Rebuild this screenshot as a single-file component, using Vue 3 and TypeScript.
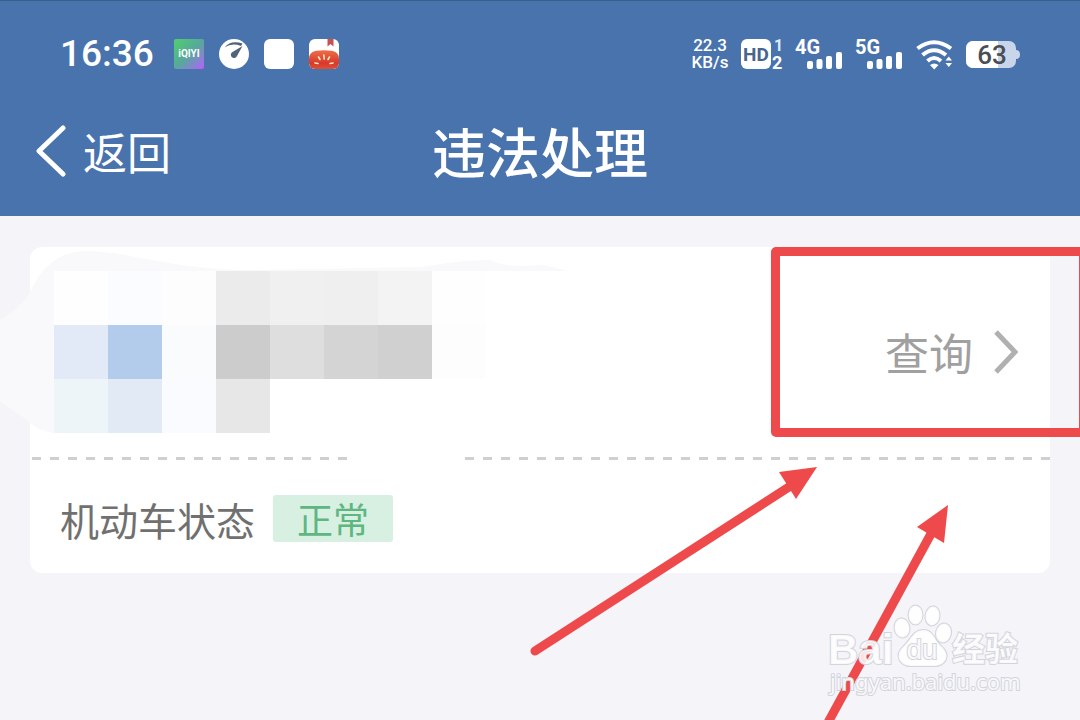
<script setup lang="ts">
interface Signal {
  label: string
}

const signals: Signal[] = [{ label: '4G' }, { label: '5G' }]

const mosaic: string[] = [
  '#fefefe', '#fafcff', '#fdfdfe', '#ebebeb', '#f0f0f0', '#efefef', '#f3f3f3', '#fefefe',
  '#e2eaf7', '#b3cceb', '#f9fbfd', '#cccccc', '#dedede', '#d4d4d4', '#d0d0d0', '#fdfdfd',
  '#eef5f8', '#e2eaf6', '#f9fbfe', '#e8e7e7', '#ffffff', '#ffffff', '#ffffff', '#ffffff',
]
</script>

<template>
  <div class="page">
    <header class="top">
      <div class="status">
        <div class="status-left">
          <span class="time">16:36</span>
          <svg class="app-icon" viewBox="0 0 30 30" aria-hidden="true">
            <defs>
              <linearGradient id="video" x1="0" y1="0" x2="1" y2="1">
                <stop offset="0" stop-color="#4fd06c" />
                <stop offset="0.5" stop-color="#56a99a" />
                <stop offset="0.8" stop-color="#8c80d8" />
                <stop offset="1" stop-color="#c05cfa" />
              </linearGradient>
            </defs>
            <rect width="30" height="30" rx="2" fill="url(#video)" />
            <text x="15" y="18" text-anchor="middle" class="video-text">iQIYI</text>
          </svg>
          <svg class="app-icon" viewBox="0 0 30 30" aria-hidden="true">
            <circle cx="15" cy="15" r="15" fill="#fff" />
            <path d="M5.500 8.500 Q12 0.500 23.500 4.500 L22 7 Q13 3.500 5.500 8.500 Z" fill="#506379" />
            <path d="M23.500 7 L18 17 A3.200 3.200 0 1 1 13.500 13 Z" fill="#506379" />
          </svg>
          <svg class="app-icon" viewBox="0 0 30 30" aria-hidden="true">
            <rect width="30" height="30" rx="6" fill="#fff" />
          </svg>
          <svg class="app-icon" viewBox="0 0 30 30" aria-hidden="true">
            <defs>
              <linearGradient id="tomato" x1="0" y1="0" x2="0" y2="1">
                <stop offset="0" stop-color="#ec7048" />
                <stop offset="0.7" stop-color="#d9382a" />
                <stop offset="1" stop-color="#dc5236" />
              </linearGradient>
              <clipPath id="tomato-clip"><rect width="30" height="30" rx="6" /></clipPath>
            </defs>
            <g clip-path="url(#tomato-clip)">
              <rect width="30" height="30" fill="#fff" />
              <path d="M0 20 Q0 13 7 11.800 Q15 10.500 23 11.800 Q30 13 30 20 V30 H0 Z" fill="url(#tomato)" />
              <path d="M18.500 0 H24.500 V7.500 L21.500 5 L18.500 7.500 Z" fill="#c9514f" />
              <path d="M14.800 16 L15.200 20 M9.500 18 L11 20.500 M20.500 18 L19 20.500 M6 24 L9 24.500 M24 24 L21 24.500" stroke="#ffe9c8" stroke-width="1.600" stroke-linecap="round" />
            </g>
          </svg>
        </div>

        <div class="status-right">
          <div class="speed"><span>22.3</span><span>KB/s</span></div>
          <svg class="glyph" width="43" height="32" viewBox="0 0 43 32">
            <rect x="0" y="1" width="30" height="30" rx="6" fill="#fff" />
            <text x="15" y="23" text-anchor="middle" class="hd">HD</text>
            <text x="33" y="13" class="sim">1</text>
            <text x="31" y="31" class="sim sim-active">2</text>
          </svg>
          <svg v-for="s in signals" :key="s.label" class="glyph" width="48" height="32" viewBox="0 0 48 32">
            <text x="-1" y="16" class="net">{{ s.label }}</text>
            <g fill="#fff">
              <rect x="11" y="23" width="6" height="8" rx="2" />
              <rect x="20.500" y="21" width="6" height="10" rx="2" />
              <rect x="30" y="18" width="6" height="13" rx="2" />
              <rect x="40" y="14" width="6" height="17" rx="2" />
            </g>
          </svg>
          <svg width="38" height="32" viewBox="0 0 38 32" aria-hidden="true">
            <g fill="none" stroke="#fff" stroke-width="4">
              <path d="M1.500 10.500 Q18 -2 35 10.500" />
              <path d="M6.500 17 Q18 7.500 30 17" />
              <path d="M11.500 23 Q18 17 25 23" />
            </g>
            <path d="M14 27 Q18 24 22.500 27 L18.200 31.500 Z" fill="#fff" />
            <path d="M29.500 22.500 L32.800 18.500 L36 22.500 Z M29.500 25 L32.800 29 L36 25 Z" fill="#fff" />
          </svg>
          <svg width="54" height="32" viewBox="0 0 54 32">
            <defs>
              <clipPath id="cell"><rect x="0" y="3" width="50" height="27" rx="7" /></clipPath>
            </defs>
            <rect x="0" y="3" width="50" height="27" rx="7" fill="#c8d5ea" />
            <rect x="0" y="3" width="32" height="27" fill="#fff" clip-path="url(#cell)" />
            <path d="M50 12 Q54 12 54 16.500 Q54 21 50 21 Z" fill="#c8d5ea" />
            <text x="26" y="26" text-anchor="middle" class="charge">63</text>
          </svg>
        </div>
      </div>

      <nav class="bar">
        <button class="back" type="button">
          <svg width="30" height="52" viewBox="0 0 30 52" aria-hidden="true">
            <path d="M27 3 L3 26 L27 49" fill="none" stroke="#fff" stroke-width="5" stroke-linecap="round" stroke-linejoin="round" />
          </svg>
          <span>返回</span>
        </button>
        <h1>违法处理</h1>
      </nav>
    </header>

    <main>
      <section class="card">
        <svg class="smudge" width="600" height="240" viewBox="0 0 600 240" aria-hidden="true">
          <path d="M0 73 Q22 60 30 45 Q48 5 85 4 C125 3 170 23 250 23 L420 20 Q470 12 490 13 Q505 21 545 18 L568 24 H54 V186 Q36 183 28 174 L0 154 Z" fill="#f9f9fb" />
        </svg>
        <div class="vehicle">
          <div class="mosaic" aria-hidden="true">
            <i v-for="(colour, n) in mosaic" :key="n" :style="{ background: colour }"></i>
          </div>
          <button class="query" type="button">
            <span>查询</span>
            <svg width="26" height="46" viewBox="0 0 26 46" aria-hidden="true">
              <path d="M3 3 L22 23 L3 43" fill="none" stroke="#b0b0b0" stroke-width="5" />
            </svg>
          </button>
        </div>
        <div class="divider"><span></span><span></span></div>
        <div class="state">
          <span class="state-name">机动车状态</span>
          <span class="tag">正常</span>
        </div>
        <div class="highlight"></div>
      </section>
    </main>

    <svg class="arrows" width="560" height="270" viewBox="0 0 560 270" aria-hidden="true">
      <g fill="#ee4a4b" stroke="#ee4a4b">
        <path d="M15 201 L272 35" stroke-width="9" stroke-linecap="round" />
        <path d="M297 17 L259 22 L276 49 Z" stroke="none" />
        <path d="M305 278 L412 82" stroke-width="9" />
        <path d="M428 55 L397 77 L424 93 Z" stroke="none" />
      </g>
    </svg>

    <svg class="watermark" width="204" height="100" viewBox="0 0 204 100">
      <g class="mark">
        <text x="4" y="64" class="bai">Bai</text>
        <ellipse cx="78" cy="28" rx="7.500" ry="9.500" transform="rotate(-8 78 28)" />
        <ellipse cx="91.500" cy="15" rx="7" ry="9.500" />
        <ellipse cx="108.500" cy="16" rx="7" ry="9.500" transform="rotate(8 108.500 16)" />
        <ellipse cx="119.500" cy="33" rx="7.500" ry="9.500" transform="rotate(12 119.500 33)" />
        <path d="M99 30 C110 30 110 40 117 46 C128 56 121 66 110 66 H87 C76 66 70 55 79 47 C87 40 89 30 99 30 Z" />
        <text x="98" y="59" text-anchor="middle" class="du">du</text>
        <text x="128" y="61" class="jingyan">经验</text>
        <text x="6" y="90" class="site">jingyan.baidu.com</text>
      </g>
    </svg>
  </div>
</template>

<style>
body {
  margin: 0;
  background: #f4f4f9;
}
</style>

<style scoped>
.page {
  position: relative;
  min-height: 100vh;
  overflow: hidden;
  background: #f4f4f9;
  font-family: "Noto Sans CJK SC", sans-serif;
}

.top {
  box-sizing: border-box;
  height: 216px;
  border-top: 1px solid #365f8f;
  background: #4973ad;
  color: #fff;
}

.status {
  display: flex;
  justify-content: space-between;
  align-items: center;
  height: 106px;
  padding: 0 60px;
  font-family: Roboto, sans-serif;
}

.status-left,
.status-right {
  display: flex;
  align-items: center;
}

.status-left {
  gap: 15px;
}

.status-right {
  gap: 12px;
}

.time {
  width: 99px;
  font-size: 37px;
  font-weight: 500;
  line-height: 44px;
}

.app-icon {
  width: 30px;
  height: 30px;
}

.glyph {
  overflow: visible;
}

.video-text {
  font: 700 10px Roboto, sans-serif;
  fill: #fff;
}

.speed {
  display: flex;
  flex-direction: column;
  align-items: center;
  width: 38px;
  font-size: 17px;
  font-weight: 500;
  line-height: 17px;
}

.hd {
  font: 700 19px Roboto, sans-serif;
  fill: #47658f;
}

.sim {
  font: 700 16px Roboto, sans-serif;
  fill: #dcebfb;
}

.sim-active {
  font-size: 18px;
  fill: #fff;
}

.net {
  font: 700 20px Roboto, sans-serif;
  fill: #fff;
}

.charge {
  font: 500 26px Roboto, sans-serif;
  fill: #4a4d52;
}

.bar {
  display: grid;
  grid-template-columns: 1fr auto 1fr;
  align-items: center;
  height: 88px;
  padding: 0 36px;
}

button {
  display: flex;
  align-items: center;
  padding: 0;
  border: 0;
  background: none;
  font-family: inherit;
  cursor: pointer;
}

.back {
  gap: 17px;
  color: #fff;
  font-size: 44px;
  line-height: 60px;
}

h1 {
  margin: 0;
  font-size: 54px;
  font-weight: 500;
  line-height: 72px;
}

main {
  padding: 31px 30px 0;
}

.card {
  position: relative;
  border-radius: 12px;
  background: #fff;
}

.smudge {
  position: absolute;
  top: 0;
  left: -30px;
}

.vehicle {
  position: relative;
  display: flex;
  justify-content: space-between;
  align-items: center;
  height: 210px;
  padding: 0 31px 0 24px;
}

.mosaic {
  display: grid;
  grid-template-columns: repeat(8, 54px);
  grid-auto-rows: 54px;
}

.query {
  gap: 20px;
  color: #a0a0a0;
  font-size: 44px;
  line-height: 60px;
}

.divider {
  display: flex;
  justify-content: space-between;
  gap: 116px;
  height: 3px;
}

.divider span {
  background: repeating-linear-gradient(90deg, transparent 0 2px, #cfcfcf 2px 11px, transparent 11px 18px);
}

.divider span:first-child {
  width: 317px;
}

.divider span:last-child {
  flex: 1;
}

.state {
  display: flex;
  align-items: center;
  gap: 18px;
  height: 113px;
  padding: 4px 30px 0;
  box-sizing: border-box;
}

.state-name {
  color: #707070;
  font-size: 39px;
  line-height: 44px;
}

.tag {
  padding: 0 24px;
  border-radius: 3px;
  background: #d7f0e2;
  color: #5eb681;
  font-size: 36px;
  line-height: 47px;
}

.highlight {
  position: absolute;
  top: 0;
  right: -38px;
  box-sizing: border-box;
  width: 317px;
  height: 190px;
  border: 9px solid #ee4a4b;
  border-radius: 5px;
  pointer-events: none;
}

.arrows {
  position: absolute;
  top: 450px;
  right: 0;
}

.watermark {
  position: absolute;
  top: 600px;
  right: 52px;
}

.mark {
  fill: rgba(255, 255, 255, 0.85);
  stroke: #d3d4dc;
  stroke-width: 2px;
  paint-order: stroke;
}

.bai {
  font: 700 42px "Liberation Sans", sans-serif;
}

.du {
  font: 400 28px "Liberation Sans", sans-serif;
}

.jingyan {
  font: 700 33px "Noto Sans CJK SC", sans-serif;
}

.site {
  font: 400 22px "Noto Sans", sans-serif;
}
</style>
